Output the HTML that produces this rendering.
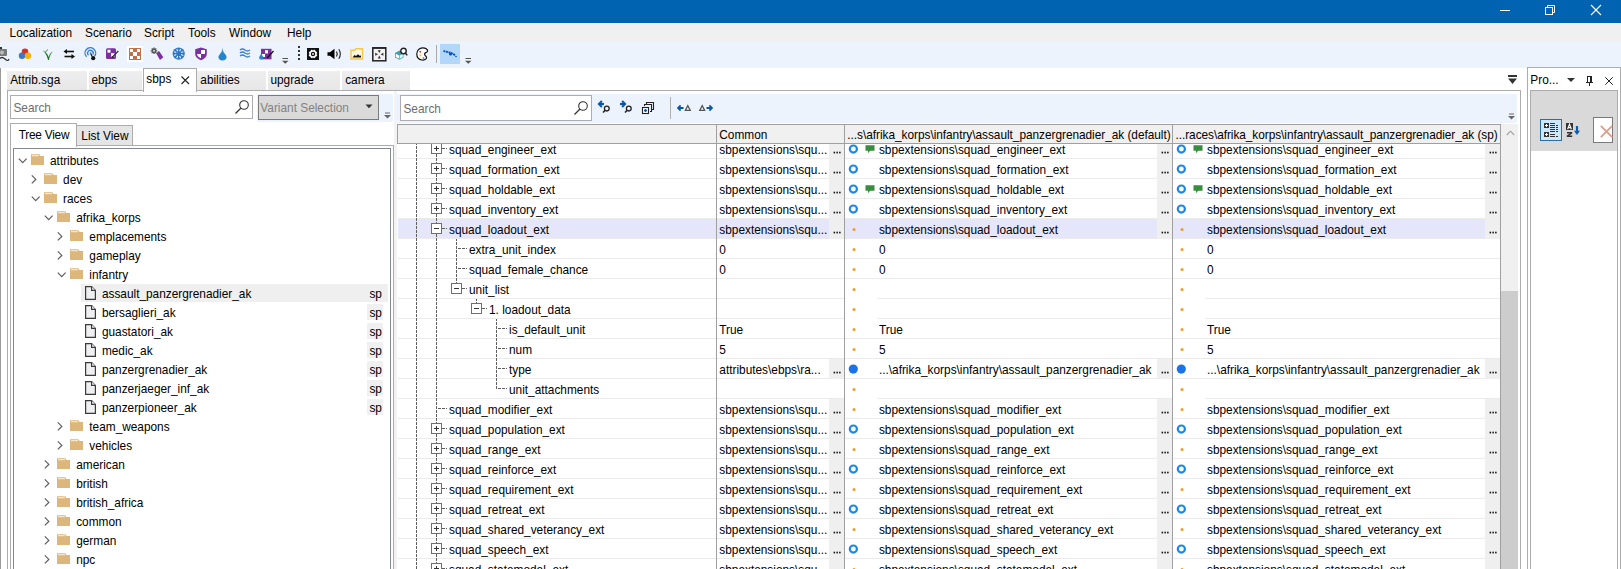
<!DOCTYPE html><html><head><meta charset="utf-8"><style>
html,body{margin:0;padding:0;}
body{width:1621px;height:569px;overflow:hidden;position:relative;background:#fff;font-family:"Liberation Sans",sans-serif;}
.t{position:absolute;white-space:nowrap;line-height:1;}
svg{overflow:visible;position:absolute}
</style></head><body>
<div style="position:absolute;left:0px;top:0px;width:1621px;height:23px;background:#0063B1;"></div>
<div style="position:absolute;left:1500px;top:10px;width:10px;height:1px;background:#fff;"></div>
<svg style="position:absolute;left:1544px;top:3px;" width="13" height="13" viewBox="0 0 13 13"><rect x="1.5" y="4.5" width="7" height="7" fill="none" stroke="#fff" stroke-width="1"/><path d="M3.5 4.5V2.5H10.5V9.5H8.5" fill="none" stroke="#fff" stroke-width="1"/></svg>
<svg style="position:absolute;left:1590px;top:4px;" width="13" height="13" viewBox="0 0 13 13"><path d="M1 1L11 11M11 1L1 11" stroke="#fff" stroke-width="1.1"/></svg>
<div style="position:absolute;left:0px;top:23px;width:1621px;height:18px;background:#F0F0F0;"></div>
<div class="t" style="left:9.6px;top:28px;font-size:11.85px;color:#000;">Localization</div>
<div class="t" style="left:85px;top:28px;font-size:11.85px;color:#000;">Scenario</div>
<div class="t" style="left:144px;top:28px;font-size:11.85px;color:#000;">Script</div>
<div class="t" style="left:188px;top:28px;font-size:11.85px;color:#000;">Tools</div>
<div class="t" style="left:229px;top:28px;font-size:11.85px;color:#000;">Window</div>
<div class="t" style="left:287px;top:28px;font-size:11.85px;color:#000;">Help</div>
<div style="position:absolute;left:0px;top:41px;width:1621px;height:27px;background:#ECF3FC;"></div>
<svg style="position:absolute;left:0px;top:47px;" width="10" height="14" viewBox="0 0 10 14"><rect x="-3" y="2" width="10" height="7" rx="1" fill="#7a7a7a"/><circle cx="2" cy="5.5" r="2" fill="#bbb"/><rect x="-1" y="0" width="3" height="2" fill="#333"/><path d="M-1 12 Q2 9 5 12 T9 12" fill="none" stroke="#333" stroke-width="1.2"/></svg>
<svg style="position:absolute;left:17px;top:47px;" width="16" height="14" viewBox="0 0 16 14"><circle cx="8" cy="4.9" r="3.3" fill="#d93025"/><circle cx="5" cy="8.7" r="3.2" fill="#3a78c9"/><circle cx="11" cy="8.7" r="3.2" fill="#f4b400"/></svg>
<svg style="position:absolute;left:42px;top:48px;" width="12" height="13" viewBox="0 0 12 13"><path d="M6 12 C5.6 9 4 5.5 0.8 2.2 C4.2 4 6 6.5 6.6 9.2 C7.3 6.8 8.6 4.8 10.8 3.6 C8.8 5.6 7.4 8.5 7 12 Z" fill="#117a11"/><path d="M3.2 4 C4.5 3.5 5.2 2.5 5.5 1.5" stroke="#117a11" stroke-width="0.8" fill="none"/></svg>
<svg style="position:absolute;left:63px;top:48px;" width="13" height="11" viewBox="0 0 13 11"><path d="M11 3.5H2.5" stroke="#111" stroke-width="1.6"/><path d="M0.5 3.5L4 1V6Z" fill="#111"/><path d="M1.5 8.5H10" stroke="#111" stroke-width="1.6"/><path d="M12 8.5L8.5 6V11Z" fill="#111"/></svg>
<svg style="position:absolute;left:84px;top:47px;" width="14" height="14" viewBox="0 0 14 14"><path d="M2.6 9.8 A5.3 5.3 0 1 1 10.6 9.2" fill="none" stroke="#3d7fd1" stroke-width="1.4"/><path d="M4.5 8.2 A2.8 2.8 0 1 1 8.8 7.6" fill="none" stroke="#3d7fd1" stroke-width="1.3"/><circle cx="6.6" cy="6.2" r="1" fill="#3d7fd1"/><path d="M6.8 7 L8.2 9.5" stroke="#111" stroke-width="1.2"/><circle cx="9.2" cy="11.2" r="2.1" fill="#111"/></svg>
<svg style="position:absolute;left:105px;top:47px;" width="16" height="14" viewBox="0 0 16 14"><rect x="1" y="1.2" width="10" height="10.8" rx="1.5" fill="#7b2fa0"/><rect x="2.5" y="2.7" width="3" height="3" fill="#fff"/><rect x="6" y="6.2" width="3.5" height="3.5" fill="#fff"/><path d="M7 10.5L13.3 4" stroke="#333" stroke-width="1.2"/><path d="M6.3 11.2L7.5 9.3L8.3 10.1Z" fill="#111"/></svg>
<div style="position:absolute;left:127px;top:46px;width:16px;height:16px;background:#ffffff;"></div>
<svg style="position:absolute;left:129px;top:48px;shape-rendering:crispEdges" width="12" height="12" viewBox="0 0 12 12"><rect x="0" y="0" width="12" height="12" fill="#c0714a"/><rect x="1" y="1" width="3" height="3" fill="#fff"/><rect x="8" y="1" width="3" height="3" fill="#fff"/><rect x="4" y="4" width="4" height="4" fill="#fff"/><rect x="1" y="8" width="3" height="3" fill="#fff"/><rect x="8" y="8" width="3" height="3" fill="#fff"/></svg>
<svg style="position:absolute;left:150px;top:47px;" width="14" height="15" viewBox="0 0 14 15"><g transform="translate(4 3.8)"><circle r="2.3" fill="#555"/><g stroke="#555" stroke-width="1.3"><path d="M0 -3.3V3.3M-3.3 0H3.3M-2.3 -2.3L2.3 2.3M2.3 -2.3L-2.3 2.3"/></g><circle r="0.9" fill="#fff"/></g><path d="M6.2 6.2 L9 4 L13.3 10.3 L10 13Z" fill="#7b2fa0"/></svg>
<svg style="position:absolute;left:172px;top:47px;" width="14" height="14" viewBox="0 0 14 14"><circle cx="6.7" cy="6.6" r="6.1" fill="#2F76C4"/><path d="M9.10 7.59L11.32 8.51M7.69 9.00L8.61 11.22M5.71 9.00L4.79 11.22M4.30 7.59L2.08 8.51M4.30 5.61L2.08 4.69M5.71 4.20L4.79 1.98M7.69 4.20L8.61 1.98M9.10 5.61L11.32 4.69" stroke="#EAF1FA" stroke-width="1.1"/></svg>
<svg style="position:absolute;left:194px;top:47px;" width="14" height="14" viewBox="0 0 14 14"><path d="M7 0.6 L12.8 2.3 V7 C12.8 10 10 12.2 7 13.2 C4 12.2 1.2 10 1.2 7 V2.3 Z" fill="#7b2fa0"/><path d="M7 3 H11 V7 H7 Z" fill="#fff"/><path d="M3 7 H7 V11.3 C5 10.5 3.3 9.2 3 7 Z" fill="#fff"/></svg>
<svg style="position:absolute;left:217px;top:47px;" width="11" height="14" viewBox="0 0 11 14"><path d="M5.6 0.8 C5.6 3.5 6 5 8 7 C9.5 8.6 9.6 10 9.6 10.2 A4.2 4.2 0 0 1 1.4 10.2 C1.4 10 1.6 8.6 3 7 C5 5 5.4 3.5 5.4 0.8 Z" fill="#2385cc"/></svg>
<svg style="position:absolute;left:239px;top:48px;" width="12" height="11" viewBox="0 0 12 11"><g fill="none" stroke="#3b7fcc" stroke-width="1.3"><path d="M1 2 Q3.5 0 6 2 T11 2"/><path d="M1 5 Q3.5 3 6 5 T11 5"/><path d="M1 8 Q3.5 6 6 8 T11 8"/></g></svg>
<svg style="position:absolute;left:259px;top:48px;" width="16" height="14" viewBox="0 0 16 14"><rect x="2" y="0.8" width="10.5" height="10.5" fill="#7b2fa0"/><rect x="6" y="2.2" width="3" height="3.2" fill="#fff"/><rect x="3" y="6" width="3" height="3" fill="#fff"/><path d="M2.2 5 C2.2 7 4.5 8 4.5 10 A2.4 2.4 0 0 1 0 10 C0 8 2.2 7 2.2 5Z" fill="#2385cc"/><path d="M8 10L14.5 3" stroke="#111" stroke-width="1.2"/></svg>
<svg style="position:absolute;left:282px;top:58px;" width="7" height="7" viewBox="0 0 7 7"><rect x="0.5" y="0" width="5.5" height="1" fill="#555"/><path d="M0 2.8H6.5L3.25 5.8Z" fill="#555"/></svg>
<div style="position:absolute;left:298px;top:46px;width:2px;height:2px;background:#333;"></div>
<div style="position:absolute;left:298px;top:50px;width:2px;height:2px;background:#333;"></div>
<div style="position:absolute;left:298px;top:54px;width:2px;height:2px;background:#333;"></div>
<div style="position:absolute;left:298px;top:58px;width:2px;height:2px;background:#333;"></div>
<svg style="position:absolute;left:307px;top:48px;" width="13" height="13" viewBox="0 0 13 13"><rect x="0" y="0" width="12" height="12" fill="#111"/><circle cx="6" cy="6" r="4.4" fill="#fff"/><g stroke="#111" stroke-width="1.6"><path d="M6 0.8V2.3M6 9.7V11.2M0.8 6H2.3M9.7 6H11.2M2.3 2.3L3.3 3.3M8.7 8.7L9.7 9.7M9.7 2.3L8.7 3.3M3.3 8.7L2.3 9.7"/></g><circle cx="6" cy="6" r="2.2" fill="#111"/><circle cx="6" cy="6" r="0.9" fill="#fff"/></svg>
<svg style="position:absolute;left:327px;top:48px;" width="16" height="12" viewBox="0 0 16 12"><path d="M0.5 4.3H3L7.5 0.8V11.2L3 7.7H0.5Z" fill="#000"/><path d="M9.5 3.5 Q11 6 9.5 8.5" fill="none" stroke="#111" stroke-width="1.1"/><path d="M11.8 1.2 Q14.8 6 11.8 10.8" fill="none" stroke="#222" stroke-width="1.1"/></svg>
<svg style="position:absolute;left:350px;top:48px;" width="14" height="12" viewBox="0 0 14 12"><path d="M1 2.2 H4.5 L6 0.8 H12.5 V11 H1 Z" fill="#fff8e0" stroke="#f7c64a" stroke-width="1.4"/><path d="M2.5 9.6 L4.5 7 L6 8 L8 6.2 L10 8 L11 7.2 V9.6 Z" fill="#111"/></svg>
<svg style="position:absolute;left:372px;top:47px;" width="15" height="15" viewBox="0 0 15 15"><rect x="0.8" y="0.8" width="13" height="13" fill="#f2f2f2" stroke="#222" stroke-width="1.5"/><rect x="0.8" y="0.5" width="13" height="1.3" fill="#222"/><g fill="#333"><path d="M7.3 6 L5.8 3.2H8.8Z"/><path d="M7.3 8.6 L5.8 11.4H8.8Z"/><path d="M6 7.3 L3.2 5.8V8.8Z"/><path d="M8.6 7.3 L11.4 5.8V8.8Z"/></g></svg>
<svg style="position:absolute;left:394px;top:47px;" width="14" height="14" viewBox="0 0 14 14"><path d="M1 6 L5.5 3.6 L9.5 6 V10.5 L5.5 12.8 L1 10.5Z" fill="#3ba0b0"/><path d="M1.8 6.8 L5.2 8.5 V11.8 L1.8 10Z" fill="#fff"/><path d="M5.8 8.5 L8.8 6.8 V10 L5.8 11.8Z" fill="#dff"/><circle cx="9.5" cy="4" r="2.7" fill="#fff" stroke="#222" stroke-width="1.4"/><path d="M11.4 6 L13.2 8.4" stroke="#222" stroke-width="1.5"/></svg>
<svg style="position:absolute;left:416px;top:47px;" width="13" height="14" viewBox="0 0 13 14"><path d="M6.5 0.8 C10 0.8 12.2 2.8 11.5 4.5 C10.8 5.5 8.5 5.5 8.5 7.2 C8.5 9 11.3 9.3 10.5 11.3 C9.6 13 7.5 13.2 6 13 C2.5 12.5 0.8 10 0.8 7 C0.8 3.5 3.3 0.8 6.5 0.8Z" fill="#fff" stroke="#111" stroke-width="1.2"/><circle cx="4.2" cy="4.7" r="1" fill="#e04040"/><circle cx="4.4" cy="8.5" r="1.1" fill="#f5c242"/><circle cx="7.5" cy="11" r="1" fill="#6a8fe0"/></svg>
<div style="position:absolute;left:436px;top:45px;width:1px;height:18px;background:#A8A8A8;"></div>
<div style="position:absolute;left:440px;top:44px;width:20px;height:20px;background:#B3D7F8;"></div>
<svg style="position:absolute;left:442px;top:50px;" width="16" height="8" viewBox="0 0 16 8"><path d="M1.5 1 C3 1.2 5 2 7 2.3 C9 2.8 11 3.6 13.5 5.8" stroke="#0050c0" stroke-width="1.8" fill="none" stroke-dasharray="2 0.6"/><circle cx="8.5" cy="4" r="1.5" fill="#0050c0"/><circle cx="14" cy="6.5" r="0.8" fill="#0050c0"/></svg>
<svg style="position:absolute;left:465px;top:58px;" width="7" height="7" viewBox="0 0 7 7"><rect x="0.5" y="0" width="5.5" height="1" fill="#555"/><path d="M0 2.8H6.5L3.25 5.8Z" fill="#555"/></svg>
<div style="position:absolute;left:0px;top:68px;width:1px;height:501px;background:#9A9A9A;"></div>
<div style="position:absolute;left:7px;top:71px;width:80px;height:19px;background:linear-gradient(#EEEEEE,#E7E7E7);"></div>
<div class="t" style="left:10.2px;top:75px;font-size:11.85px;color:#000;">Attrib.sga</div>
<div style="position:absolute;left:89px;top:71px;width:53px;height:19px;background:linear-gradient(#EEEEEE,#E7E7E7);"></div>
<div class="t" style="left:91.5px;top:75px;font-size:11.85px;color:#000;">ebps</div>
<div style="position:absolute;left:197px;top:71px;width:69px;height:19px;background:linear-gradient(#EEEEEE,#E7E7E7);"></div>
<div class="t" style="left:200.3px;top:75px;font-size:11.85px;color:#000;">abilities</div>
<div style="position:absolute;left:268px;top:71px;width:72px;height:19px;background:linear-gradient(#EEEEEE,#E7E7E7);"></div>
<div class="t" style="left:270.4px;top:75px;font-size:11.85px;color:#000;">upgrade</div>
<div style="position:absolute;left:342px;top:71px;width:68px;height:19px;background:linear-gradient(#EEEEEE,#E7E7E7);"></div>
<div class="t" style="left:345.2px;top:75px;font-size:11.85px;color:#000;">camera</div>
<div style="position:absolute;left:7px;top:90px;width:1514px;height:1px;background:#ACACAC;"></div>
<div style="position:absolute;left:7px;top:90px;width:1px;height:479px;background:#ACACAC;"></div>
<div style="position:absolute;left:1520px;top:90px;width:1px;height:479px;background:#ACACAC;"></div>
<div style="position:absolute;left:143px;top:68px;width:54px;height:24px;background:#fff;box-sizing:border-box;border:1px solid #ACACAC;border-bottom:none;"></div>
<div class="t" style="left:146.3px;top:74px;font-size:11.85px;color:#000;">sbps</div>
<svg style="position:absolute;left:181px;top:76px;" width="9" height="9" viewBox="0 0 9 9"><path d="M0.5 0.5L8 8M8 0.5L0.5 8" stroke="#222" stroke-width="1.1"/></svg>
<svg style="position:absolute;left:1507px;top:74px;" width="11" height="11" viewBox="0 0 11 11"><rect x="1" y="1" width="9" height="2" fill="#333"/><path d="M1 4.5H10L5.5 10Z" fill="#333"/></svg>
<div style="position:absolute;left:10px;top:95px;width:243px;height:24px;background:#fff;box-sizing:border-box;border:1px solid #ABADB3;"></div>
<div class="t" style="left:13.4px;top:103px;font-size:11.85px;color:#6D6D6D;">Search</div>
<svg style="position:absolute;left:234px;top:99px;" width="16" height="16" viewBox="0 0 16 16"><circle cx="10" cy="6" r="4.3" fill="none" stroke="#333" stroke-width="1.1"/><path d="M7 9L1.5 14.5" stroke="#333" stroke-width="1.2"/></svg>
<div style="position:absolute;left:257px;top:94px;width:136px;height:28px;background:#ECF3FC;border-radius:2px;"></div>
<div style="position:absolute;left:258px;top:95px;width:121px;height:25px;background:#DADADA;box-sizing:border-box;border:1px solid #7A7A7A;"></div>
<div class="t" style="left:260.3px;top:103px;font-size:11.85px;color:#838383;">Variant Selection</div>
<svg style="position:absolute;left:365px;top:104px;" width="8" height="5" viewBox="0 0 8 5"><path d="M0.5 0.5H7.5L4 4.2Z" fill="#333"/></svg>
<svg style="position:absolute;left:384px;top:112px;" width="7" height="8" viewBox="0 0 7 8"><rect x="1" y="0.5" width="5" height="1" fill="#666"/><path d="M0 3H7L3.5 6.5Z" fill="#666"/></svg>
<div style="position:absolute;left:76px;top:125px;width:57px;height:21px;background:#E5E5E5;box-sizing:border-box;border:1px solid #ACACAC;border-bottom:none;"></div>
<div class="t" style="left:81.3px;top:131px;font-size:11.85px;color:#000;">List View</div>
<div style="position:absolute;left:10px;top:145px;width:384px;height:424px;background:#fff;box-sizing:border-box;border:1px solid #ACACAC;border-bottom:none;"></div>
<div style="position:absolute;left:10px;top:123px;width:67px;height:24px;background:#fff;box-sizing:border-box;border:1px solid #ACACAC;border-bottom:none;"></div>
<div class="t" style="left:18.8px;top:130px;font-size:11.85px;color:#000;letter-spacing:-0.25px">Tree View</div>
<div style="position:absolute;left:13px;top:148px;width:378px;height:421px;background:#fff;box-sizing:border-box;border:1px solid #828790;border-bottom:none;"></div>
<svg style="position:absolute;left:18.0px;top:157.5px;" width="10" height="7" viewBox="0 0 10 7"><path d="M0.8 0.6 L4.7 4.6 L8.6 0.6" fill="none" stroke="#606060" stroke-width="1.25"/></svg>
<svg style="position:absolute;left:30.7px;top:154px;" width="13" height="11" viewBox="0 0 13 11"><path d="M0 0.2 H8.3 L9.6 2 H13 V11 H0 Z" fill="#DCB67A"/><rect x="1" y="1.2" width="7" height="1" fill="#FAF2E2"/></svg>
<div class="t" style="left:50.0px;top:156px;font-size:11.85px;color:#000;">attributes</div>
<svg style="position:absolute;left:31.0px;top:175px;" width="7" height="10" viewBox="0 0 7 10"><path d="M0.8 0.4 L4.8 4.4 L0.8 8.4" fill="none" stroke="#606060" stroke-width="1.25"/></svg>
<svg style="position:absolute;left:43.8px;top:173px;" width="13" height="11" viewBox="0 0 13 11"><path d="M0 0.2 H8.3 L9.6 2 H13 V11 H0 Z" fill="#DCB67A"/><rect x="1" y="1.2" width="7" height="1" fill="#FAF2E2"/></svg>
<div class="t" style="left:63.1px;top:175px;font-size:11.85px;color:#000;">dev</div>
<svg style="position:absolute;left:31.1px;top:195.5px;" width="10" height="7" viewBox="0 0 10 7"><path d="M0.8 0.6 L4.7 4.6 L8.6 0.6" fill="none" stroke="#606060" stroke-width="1.25"/></svg>
<svg style="position:absolute;left:43.8px;top:192px;" width="13" height="11" viewBox="0 0 13 11"><path d="M0 0.2 H8.3 L9.6 2 H13 V11 H0 Z" fill="#DCB67A"/><rect x="1" y="1.2" width="7" height="1" fill="#FAF2E2"/></svg>
<div class="t" style="left:63.1px;top:194px;font-size:11.85px;color:#000;">races</div>
<svg style="position:absolute;left:44.2px;top:214.5px;" width="10" height="7" viewBox="0 0 10 7"><path d="M0.8 0.6 L4.7 4.6 L8.6 0.6" fill="none" stroke="#606060" stroke-width="1.25"/></svg>
<svg style="position:absolute;left:56.9px;top:211px;" width="13" height="11" viewBox="0 0 13 11"><path d="M0 0.2 H8.3 L9.6 2 H13 V11 H0 Z" fill="#DCB67A"/><rect x="1" y="1.2" width="7" height="1" fill="#FAF2E2"/></svg>
<div class="t" style="left:76.2px;top:213px;font-size:11.85px;color:#000;">afrika_korps</div>
<svg style="position:absolute;left:57.199999999999996px;top:232px;" width="7" height="10" viewBox="0 0 7 10"><path d="M0.8 0.4 L4.8 4.4 L0.8 8.4" fill="none" stroke="#606060" stroke-width="1.25"/></svg>
<svg style="position:absolute;left:70.0px;top:230px;" width="13" height="11" viewBox="0 0 13 11"><path d="M0 0.2 H8.3 L9.6 2 H13 V11 H0 Z" fill="#DCB67A"/><rect x="1" y="1.2" width="7" height="1" fill="#FAF2E2"/></svg>
<div class="t" style="left:89.3px;top:232px;font-size:11.85px;color:#000;">emplacements</div>
<svg style="position:absolute;left:57.199999999999996px;top:251px;" width="7" height="10" viewBox="0 0 7 10"><path d="M0.8 0.4 L4.8 4.4 L0.8 8.4" fill="none" stroke="#606060" stroke-width="1.25"/></svg>
<svg style="position:absolute;left:70.0px;top:249px;" width="13" height="11" viewBox="0 0 13 11"><path d="M0 0.2 H8.3 L9.6 2 H13 V11 H0 Z" fill="#DCB67A"/><rect x="1" y="1.2" width="7" height="1" fill="#FAF2E2"/></svg>
<div class="t" style="left:89.3px;top:251px;font-size:11.85px;color:#000;">gameplay</div>
<svg style="position:absolute;left:57.3px;top:271.5px;" width="10" height="7" viewBox="0 0 10 7"><path d="M0.8 0.6 L4.7 4.6 L8.6 0.6" fill="none" stroke="#606060" stroke-width="1.25"/></svg>
<svg style="position:absolute;left:70.0px;top:268px;" width="13" height="11" viewBox="0 0 13 11"><path d="M0 0.2 H8.3 L9.6 2 H13 V11 H0 Z" fill="#DCB67A"/><rect x="1" y="1.2" width="7" height="1" fill="#FAF2E2"/></svg>
<div class="t" style="left:89.3px;top:270px;font-size:11.85px;color:#000;">infantry</div>
<div style="position:absolute;left:81px;top:284px;width:307px;height:17.5px;background:#EFEFEF;"></div>
<div class="t" style="left:369.4px;top:289px;font-size:11.85px;color:#000;">sp</div>
<svg style="position:absolute;left:85px;top:286px;" width="12" height="15" viewBox="0 0 12 15"><path d="M0.6 0.6 H6.6 L10.4 4.4 V13.4 H0.6 Z" fill="#EFEFF1" stroke="#3a3a3a" stroke-width="1.2" stroke-linejoin="miter"/><path d="M6.6 0.6 V4.4 H10.4" fill="#fff" stroke="#3a3a3a" stroke-width="1.2"/></svg>
<div class="t" style="left:101.9px;top:289px;font-size:11.85px;color:#000;">assault_panzergrenadier_ak</div>
<div style="position:absolute;left:367px;top:304px;width:16px;height:16px;background:#F0F0F0;"></div>
<div class="t" style="left:369.4px;top:308px;font-size:11.85px;color:#000;">sp</div>
<svg style="position:absolute;left:85px;top:305px;" width="12" height="15" viewBox="0 0 12 15"><path d="M0.6 0.6 H6.6 L10.4 4.4 V13.4 H0.6 Z" fill="#EFEFF1" stroke="#3a3a3a" stroke-width="1.2" stroke-linejoin="miter"/><path d="M6.6 0.6 V4.4 H10.4" fill="#fff" stroke="#3a3a3a" stroke-width="1.2"/></svg>
<div class="t" style="left:101.9px;top:308px;font-size:11.85px;color:#000;">bersaglieri_ak</div>
<div style="position:absolute;left:367px;top:323px;width:16px;height:16px;background:#F0F0F0;"></div>
<div class="t" style="left:369.4px;top:327px;font-size:11.85px;color:#000;">sp</div>
<svg style="position:absolute;left:85px;top:324px;" width="12" height="15" viewBox="0 0 12 15"><path d="M0.6 0.6 H6.6 L10.4 4.4 V13.4 H0.6 Z" fill="#EFEFF1" stroke="#3a3a3a" stroke-width="1.2" stroke-linejoin="miter"/><path d="M6.6 0.6 V4.4 H10.4" fill="#fff" stroke="#3a3a3a" stroke-width="1.2"/></svg>
<div class="t" style="left:101.9px;top:327px;font-size:11.85px;color:#000;">guastatori_ak</div>
<div style="position:absolute;left:367px;top:342px;width:16px;height:16px;background:#F0F0F0;"></div>
<div class="t" style="left:369.4px;top:346px;font-size:11.85px;color:#000;">sp</div>
<svg style="position:absolute;left:85px;top:343px;" width="12" height="15" viewBox="0 0 12 15"><path d="M0.6 0.6 H6.6 L10.4 4.4 V13.4 H0.6 Z" fill="#EFEFF1" stroke="#3a3a3a" stroke-width="1.2" stroke-linejoin="miter"/><path d="M6.6 0.6 V4.4 H10.4" fill="#fff" stroke="#3a3a3a" stroke-width="1.2"/></svg>
<div class="t" style="left:101.9px;top:346px;font-size:11.85px;color:#000;">medic_ak</div>
<div style="position:absolute;left:367px;top:361px;width:16px;height:16px;background:#F0F0F0;"></div>
<div class="t" style="left:369.4px;top:365px;font-size:11.85px;color:#000;">sp</div>
<svg style="position:absolute;left:85px;top:362px;" width="12" height="15" viewBox="0 0 12 15"><path d="M0.6 0.6 H6.6 L10.4 4.4 V13.4 H0.6 Z" fill="#EFEFF1" stroke="#3a3a3a" stroke-width="1.2" stroke-linejoin="miter"/><path d="M6.6 0.6 V4.4 H10.4" fill="#fff" stroke="#3a3a3a" stroke-width="1.2"/></svg>
<div class="t" style="left:101.9px;top:365px;font-size:11.85px;color:#000;">panzergrenadier_ak</div>
<div style="position:absolute;left:367px;top:380px;width:16px;height:16px;background:#F0F0F0;"></div>
<div class="t" style="left:369.4px;top:384px;font-size:11.85px;color:#000;">sp</div>
<svg style="position:absolute;left:85px;top:381px;" width="12" height="15" viewBox="0 0 12 15"><path d="M0.6 0.6 H6.6 L10.4 4.4 V13.4 H0.6 Z" fill="#EFEFF1" stroke="#3a3a3a" stroke-width="1.2" stroke-linejoin="miter"/><path d="M6.6 0.6 V4.4 H10.4" fill="#fff" stroke="#3a3a3a" stroke-width="1.2"/></svg>
<div class="t" style="left:101.9px;top:384px;font-size:11.85px;color:#000;">panzerjaeger_inf_ak</div>
<div style="position:absolute;left:367px;top:399px;width:16px;height:16px;background:#F0F0F0;"></div>
<div class="t" style="left:369.4px;top:403px;font-size:11.85px;color:#000;">sp</div>
<svg style="position:absolute;left:85px;top:400px;" width="12" height="15" viewBox="0 0 12 15"><path d="M0.6 0.6 H6.6 L10.4 4.4 V13.4 H0.6 Z" fill="#EFEFF1" stroke="#3a3a3a" stroke-width="1.2" stroke-linejoin="miter"/><path d="M6.6 0.6 V4.4 H10.4" fill="#fff" stroke="#3a3a3a" stroke-width="1.2"/></svg>
<div class="t" style="left:101.9px;top:403px;font-size:11.85px;color:#000;">panzerpioneer_ak</div>
<svg style="position:absolute;left:57.199999999999996px;top:422px;" width="7" height="10" viewBox="0 0 7 10"><path d="M0.8 0.4 L4.8 4.4 L0.8 8.4" fill="none" stroke="#606060" stroke-width="1.25"/></svg>
<svg style="position:absolute;left:70.0px;top:420px;" width="13" height="11" viewBox="0 0 13 11"><path d="M0 0.2 H8.3 L9.6 2 H13 V11 H0 Z" fill="#DCB67A"/><rect x="1" y="1.2" width="7" height="1" fill="#FAF2E2"/></svg>
<div class="t" style="left:89.3px;top:422px;font-size:11.85px;color:#000;">team_weapons</div>
<svg style="position:absolute;left:57.199999999999996px;top:441px;" width="7" height="10" viewBox="0 0 7 10"><path d="M0.8 0.4 L4.8 4.4 L0.8 8.4" fill="none" stroke="#606060" stroke-width="1.25"/></svg>
<svg style="position:absolute;left:70.0px;top:439px;" width="13" height="11" viewBox="0 0 13 11"><path d="M0 0.2 H8.3 L9.6 2 H13 V11 H0 Z" fill="#DCB67A"/><rect x="1" y="1.2" width="7" height="1" fill="#FAF2E2"/></svg>
<div class="t" style="left:89.3px;top:441px;font-size:11.85px;color:#000;">vehicles</div>
<svg style="position:absolute;left:44.1px;top:460px;" width="7" height="10" viewBox="0 0 7 10"><path d="M0.8 0.4 L4.8 4.4 L0.8 8.4" fill="none" stroke="#606060" stroke-width="1.25"/></svg>
<svg style="position:absolute;left:56.9px;top:458px;" width="13" height="11" viewBox="0 0 13 11"><path d="M0 0.2 H8.3 L9.6 2 H13 V11 H0 Z" fill="#DCB67A"/><rect x="1" y="1.2" width="7" height="1" fill="#FAF2E2"/></svg>
<div class="t" style="left:76.2px;top:460px;font-size:11.85px;color:#000;">american</div>
<svg style="position:absolute;left:44.1px;top:479px;" width="7" height="10" viewBox="0 0 7 10"><path d="M0.8 0.4 L4.8 4.4 L0.8 8.4" fill="none" stroke="#606060" stroke-width="1.25"/></svg>
<svg style="position:absolute;left:56.9px;top:477px;" width="13" height="11" viewBox="0 0 13 11"><path d="M0 0.2 H8.3 L9.6 2 H13 V11 H0 Z" fill="#DCB67A"/><rect x="1" y="1.2" width="7" height="1" fill="#FAF2E2"/></svg>
<div class="t" style="left:76.2px;top:479px;font-size:11.85px;color:#000;">british</div>
<svg style="position:absolute;left:44.1px;top:498px;" width="7" height="10" viewBox="0 0 7 10"><path d="M0.8 0.4 L4.8 4.4 L0.8 8.4" fill="none" stroke="#606060" stroke-width="1.25"/></svg>
<svg style="position:absolute;left:56.9px;top:496px;" width="13" height="11" viewBox="0 0 13 11"><path d="M0 0.2 H8.3 L9.6 2 H13 V11 H0 Z" fill="#DCB67A"/><rect x="1" y="1.2" width="7" height="1" fill="#FAF2E2"/></svg>
<div class="t" style="left:76.2px;top:498px;font-size:11.85px;color:#000;">british_africa</div>
<svg style="position:absolute;left:44.1px;top:517px;" width="7" height="10" viewBox="0 0 7 10"><path d="M0.8 0.4 L4.8 4.4 L0.8 8.4" fill="none" stroke="#606060" stroke-width="1.25"/></svg>
<svg style="position:absolute;left:56.9px;top:515px;" width="13" height="11" viewBox="0 0 13 11"><path d="M0 0.2 H8.3 L9.6 2 H13 V11 H0 Z" fill="#DCB67A"/><rect x="1" y="1.2" width="7" height="1" fill="#FAF2E2"/></svg>
<div class="t" style="left:76.2px;top:517px;font-size:11.85px;color:#000;">common</div>
<svg style="position:absolute;left:44.1px;top:536px;" width="7" height="10" viewBox="0 0 7 10"><path d="M0.8 0.4 L4.8 4.4 L0.8 8.4" fill="none" stroke="#606060" stroke-width="1.25"/></svg>
<svg style="position:absolute;left:56.9px;top:534px;" width="13" height="11" viewBox="0 0 13 11"><path d="M0 0.2 H8.3 L9.6 2 H13 V11 H0 Z" fill="#DCB67A"/><rect x="1" y="1.2" width="7" height="1" fill="#FAF2E2"/></svg>
<div class="t" style="left:76.2px;top:536px;font-size:11.85px;color:#000;">german</div>
<svg style="position:absolute;left:44.1px;top:555px;" width="7" height="10" viewBox="0 0 7 10"><path d="M0.8 0.4 L4.8 4.4 L0.8 8.4" fill="none" stroke="#606060" stroke-width="1.25"/></svg>
<svg style="position:absolute;left:56.9px;top:553px;" width="13" height="11" viewBox="0 0 13 11"><path d="M0 0.2 H8.3 L9.6 2 H13 V11 H0 Z" fill="#DCB67A"/><rect x="1" y="1.2" width="7" height="1" fill="#FAF2E2"/></svg>
<div class="t" style="left:76.2px;top:555px;font-size:11.85px;color:#000;">npc</div>
<div style="position:absolute;left:394px;top:91px;width:3px;height:478px;background:#F3F3F3;"></div>
<div style="position:absolute;left:396px;top:94px;width:1121px;height:29px;background:#ECF3FC;border-radius:2px;"></div>
<div style="position:absolute;left:400px;top:95px;width:192px;height:26px;background:#fff;box-sizing:border-box;border:1px solid #ABADB3;"></div>
<div class="t" style="left:403.4px;top:104px;font-size:11.85px;color:#6D6D6D;">Search</div>
<svg style="position:absolute;left:573px;top:100px;" width="16" height="16" viewBox="0 0 16 16"><circle cx="10" cy="6" r="4.3" fill="none" stroke="#333" stroke-width="1.1"/><path d="M7 9L1.5 14.5" stroke="#333" stroke-width="1.2"/></svg>
<svg style="position:absolute;left:596px;top:99px;" width="16" height="16" viewBox="0 0 16 16"><path d="M3 5 H8" stroke="#0A56A8" stroke-width="2.2"/><path d="M1.5 5 L5.2 1.3 L6.6 2.7 L4.3 5 L6.6 7.3 L5.2 8.7Z" fill="#0A56A8"/><circle cx="10.8" cy="9.6" r="2.4" fill="none" stroke="#222" stroke-width="1.3"/><path d="M9.2 11.3 L7 13.5" stroke="#222" stroke-width="1.6"/></svg>
<svg style="position:absolute;left:618px;top:99px;" width="16" height="16" viewBox="0 0 16 16"><path d="M2 5 H7" stroke="#0A56A8" stroke-width="2.2"/><path d="M8.5 5 L4.8 1.3 L3.4 2.7 L5.7 5 L3.4 7.3 L4.8 8.7Z" fill="#0A56A8"/><circle cx="10.8" cy="9.6" r="2.4" fill="none" stroke="#222" stroke-width="1.3"/><path d="M9.2 11.3 L7 13.5" stroke="#222" stroke-width="1.6"/></svg>
<svg style="position:absolute;left:641px;top:101px;" width="14" height="14" viewBox="0 0 14 14"><rect x="1.5" y="6.5" width="6" height="6" fill="#fff" stroke="#222" stroke-width="1.1"/><path d="M3.5 5 V3.5 H10.5 V10.5 H9" fill="none" stroke="#222" stroke-width="1.1"/><path d="M5.5 3 V1.5 H12.5 V8.5 H11" fill="none" stroke="#222" stroke-width="1.1"/><path d="M4.5 8V11M3 9.5H6" stroke="#0A56A8" stroke-width="1.3"/></svg>
<div style="position:absolute;left:670px;top:97px;width:1px;height:22px;background:#B0B0B0;"></div>
<svg style="position:absolute;left:676px;top:103px;" width="16" height="9" viewBox="0 0 16 9"><path d="M2.5 5 H7.5" stroke="#0A56A8" stroke-width="2"/><path d="M0.8 5 L4 1.8 L5.2 3 L3.2 5 L5.2 7 L4 8.2Z" fill="#0A56A8"/><path d="M11.8 2.6 L14.3 7.4 H9.3 Z" fill="none" stroke="#555" stroke-width="1.2"/></svg>
<svg style="position:absolute;left:698px;top:103px;" width="16" height="9" viewBox="0 0 16 9"><path d="M4.2 2.6 L6.7 7.4 H1.7 Z" fill="none" stroke="#555" stroke-width="1.2"/><path d="M8.5 5 H13.5" stroke="#0A56A8" stroke-width="2"/><path d="M15.2 5 L12 1.8 L10.8 3 L12.8 5 L10.8 7 L12 8.2Z" fill="#0A56A8"/></svg>
<svg style="position:absolute;left:1508px;top:113px;" width="7" height="8" viewBox="0 0 7 8"><rect x="1" y="0.5" width="5" height="1" fill="#666"/><path d="M0 3H7L3.5 6.5Z" fill="#666"/></svg>
<div style="position:absolute;left:397px;top:124px;width:1104px;height:1px;background:#A0A0A0;"></div>
<div style="position:absolute;left:397px;top:124px;width:1px;height:20px;background:#A0A0A0;"></div>
<div style="position:absolute;left:398px;top:125px;width:1102px;height:18px;background:#F0F0F0;"></div>
<div style="position:absolute;left:398px;top:143px;width:1102px;height:1px;background:#A0A0A0;"></div>
<div class="t" style="left:719.3px;top:130px;font-size:11.85px;color:#000;">Common</div>
<div class="t" style="left:847.3px;top:130px;font-size:11.85px;color:#000;letter-spacing:-0.03px">...s\afrika_korps\infantry\assault_panzergrenadier_ak (default)</div>
<div class="t" style="left:1175.5px;top:130px;font-size:11.85px;color:#000;letter-spacing:-0.05px">...races\afrika_korps\infantry\assault_panzergrenadier_ak (sp)</div>
<div style="position:absolute;left:1501px;top:124px;width:17px;height:445px;background:#F0F0F0;"></div>
<div style="position:absolute;left:1501px;top:291px;width:17px;height:278px;background:#CDCDCD;"></div>
<svg style="position:absolute;left:1506px;top:130px;" width="9" height="6" viewBox="0 0 9 6"><path d="M0.8 5 L4.5 1.2 L8.2 5" fill="none" stroke="#A0A0A0" stroke-width="1.1"/></svg>
<div style="position:absolute;left:398px;top:144px;width:1103px;height:425px;overflow:hidden;">
<div style="position:absolute;left:0px;top:14px;width:1103px;height:1px;background:#EBEBEB;"></div>
<div style="position:absolute;left:431px;top:-5px;width:15px;height:20px;background:#EFEFEF;"></div>
<svg style="position:absolute;left:431px;top:-5px;" width="15" height="20" viewBox="0 0 15 20"><g fill="#111"><rect x="4.6" y="12.7" width="1.5" height="1.7"/><rect x="7.4" y="12.7" width="1.5" height="1.7"/><rect x="10.1" y="12.7" width="1.5" height="1.7"/></g></svg>
<div style="position:absolute;left:759px;top:-5px;width:15px;height:20px;background:#EFEFEF;"></div>
<svg style="position:absolute;left:759px;top:-5px;" width="15" height="20" viewBox="0 0 15 20"><g fill="#111"><rect x="4.6" y="12.7" width="1.5" height="1.7"/><rect x="7.4" y="12.7" width="1.5" height="1.7"/><rect x="10.1" y="12.7" width="1.5" height="1.7"/></g></svg>
<div style="position:absolute;left:1087px;top:-5px;width:15px;height:20px;background:#EFEFEF;"></div>
<svg style="position:absolute;left:1087px;top:-5px;" width="15" height="20" viewBox="0 0 15 20"><g fill="#111"><rect x="4.6" y="12.7" width="1.5" height="1.7"/><rect x="7.4" y="12.7" width="1.5" height="1.7"/><rect x="10.1" y="12.7" width="1.5" height="1.7"/></g></svg>
<div class="t" style="left:51px;top:1px;font-size:11.85px;color:#000;">squad_engineer_ext</div>
<div class="t" style="left:321.29999999999995px;top:1px;font-size:11.85px;color:#000;">sbpextensions\squ...</div>
<div class="t" style="left:480.9px;top:1px;font-size:11.85px;color:#000;">sbpextensions\squad_engineer_ext</div>
<div class="t" style="left:809px;top:1px;font-size:11.85px;color:#000;">sbpextensions\squad_engineer_ext</div>
<svg style="position:absolute;left:450px;top:0px;" width="11" height="11" viewBox="0 0 11 11"><circle cx="5.35" cy="5.05" r="3.55" fill="none" stroke="#1E88E5" stroke-width="2.2"/></svg>
<svg style="position:absolute;left:467px;top:1px;" width="11" height="10" viewBox="0 0 11 10"><path d="M0.5 0.2 H9.5 V5.8 H5 L3.2 8.3 L3 5.8 H0.5 Z" fill="#388E3C"/></svg>
<svg style="position:absolute;left:778px;top:0px;" width="11" height="11" viewBox="0 0 11 11"><circle cx="5.35" cy="5.05" r="3.55" fill="none" stroke="#1E88E5" stroke-width="2.2"/></svg>
<svg style="position:absolute;left:795px;top:1px;" width="11" height="10" viewBox="0 0 11 10"><path d="M0.5 0.2 H9.5 V5.8 H5 L3.2 8.3 L3 5.8 H0.5 Z" fill="#388E3C"/></svg>
<div style="position:absolute;left:0px;top:34px;width:1103px;height:1px;background:#EBEBEB;"></div>
<div style="position:absolute;left:431px;top:15px;width:15px;height:20px;background:#EFEFEF;"></div>
<svg style="position:absolute;left:431px;top:15px;" width="15" height="20" viewBox="0 0 15 20"><g fill="#111"><rect x="4.6" y="12.7" width="1.5" height="1.7"/><rect x="7.4" y="12.7" width="1.5" height="1.7"/><rect x="10.1" y="12.7" width="1.5" height="1.7"/></g></svg>
<div style="position:absolute;left:759px;top:15px;width:15px;height:20px;background:#EFEFEF;"></div>
<svg style="position:absolute;left:759px;top:15px;" width="15" height="20" viewBox="0 0 15 20"><g fill="#111"><rect x="4.6" y="12.7" width="1.5" height="1.7"/><rect x="7.4" y="12.7" width="1.5" height="1.7"/><rect x="10.1" y="12.7" width="1.5" height="1.7"/></g></svg>
<div style="position:absolute;left:1087px;top:15px;width:15px;height:20px;background:#EFEFEF;"></div>
<svg style="position:absolute;left:1087px;top:15px;" width="15" height="20" viewBox="0 0 15 20"><g fill="#111"><rect x="4.6" y="12.7" width="1.5" height="1.7"/><rect x="7.4" y="12.7" width="1.5" height="1.7"/><rect x="10.1" y="12.7" width="1.5" height="1.7"/></g></svg>
<div class="t" style="left:51px;top:21px;font-size:11.85px;color:#000;">squad_formation_ext</div>
<div class="t" style="left:321.29999999999995px;top:21px;font-size:11.85px;color:#000;">sbpextensions\squ...</div>
<div class="t" style="left:480.9px;top:21px;font-size:11.85px;color:#000;">sbpextensions\squad_formation_ext</div>
<div class="t" style="left:809px;top:21px;font-size:11.85px;color:#000;">sbpextensions\squad_formation_ext</div>
<svg style="position:absolute;left:450px;top:20px;" width="11" height="11" viewBox="0 0 11 11"><circle cx="5.35" cy="5.05" r="3.55" fill="none" stroke="#1E88E5" stroke-width="2.2"/></svg>
<svg style="position:absolute;left:778px;top:20px;" width="11" height="11" viewBox="0 0 11 11"><circle cx="5.35" cy="5.05" r="3.55" fill="none" stroke="#1E88E5" stroke-width="2.2"/></svg>
<div style="position:absolute;left:0px;top:54px;width:1103px;height:1px;background:#EBEBEB;"></div>
<div style="position:absolute;left:431px;top:35px;width:15px;height:20px;background:#EFEFEF;"></div>
<svg style="position:absolute;left:431px;top:35px;" width="15" height="20" viewBox="0 0 15 20"><g fill="#111"><rect x="4.6" y="12.7" width="1.5" height="1.7"/><rect x="7.4" y="12.7" width="1.5" height="1.7"/><rect x="10.1" y="12.7" width="1.5" height="1.7"/></g></svg>
<div style="position:absolute;left:759px;top:35px;width:15px;height:20px;background:#EFEFEF;"></div>
<svg style="position:absolute;left:759px;top:35px;" width="15" height="20" viewBox="0 0 15 20"><g fill="#111"><rect x="4.6" y="12.7" width="1.5" height="1.7"/><rect x="7.4" y="12.7" width="1.5" height="1.7"/><rect x="10.1" y="12.7" width="1.5" height="1.7"/></g></svg>
<div style="position:absolute;left:1087px;top:35px;width:15px;height:20px;background:#EFEFEF;"></div>
<svg style="position:absolute;left:1087px;top:35px;" width="15" height="20" viewBox="0 0 15 20"><g fill="#111"><rect x="4.6" y="12.7" width="1.5" height="1.7"/><rect x="7.4" y="12.7" width="1.5" height="1.7"/><rect x="10.1" y="12.7" width="1.5" height="1.7"/></g></svg>
<div class="t" style="left:51px;top:41px;font-size:11.85px;color:#000;">squad_holdable_ext</div>
<div class="t" style="left:321.29999999999995px;top:41px;font-size:11.85px;color:#000;">sbpextensions\squ...</div>
<div class="t" style="left:480.9px;top:41px;font-size:11.85px;color:#000;">sbpextensions\squad_holdable_ext</div>
<div class="t" style="left:809px;top:41px;font-size:11.85px;color:#000;">sbpextensions\squad_holdable_ext</div>
<svg style="position:absolute;left:450px;top:40px;" width="11" height="11" viewBox="0 0 11 11"><circle cx="5.35" cy="5.05" r="3.55" fill="none" stroke="#1E88E5" stroke-width="2.2"/></svg>
<svg style="position:absolute;left:467px;top:41px;" width="11" height="10" viewBox="0 0 11 10"><path d="M0.5 0.2 H9.5 V5.8 H5 L3.2 8.3 L3 5.8 H0.5 Z" fill="#388E3C"/></svg>
<svg style="position:absolute;left:778px;top:40px;" width="11" height="11" viewBox="0 0 11 11"><circle cx="5.35" cy="5.05" r="3.55" fill="none" stroke="#1E88E5" stroke-width="2.2"/></svg>
<svg style="position:absolute;left:795px;top:41px;" width="11" height="10" viewBox="0 0 11 10"><path d="M0.5 0.2 H9.5 V5.8 H5 L3.2 8.3 L3 5.8 H0.5 Z" fill="#388E3C"/></svg>
<div style="position:absolute;left:0px;top:74px;width:1103px;height:1px;background:#EBEBEB;"></div>
<div style="position:absolute;left:431px;top:55px;width:15px;height:20px;background:#EFEFEF;"></div>
<svg style="position:absolute;left:431px;top:55px;" width="15" height="20" viewBox="0 0 15 20"><g fill="#111"><rect x="4.6" y="12.7" width="1.5" height="1.7"/><rect x="7.4" y="12.7" width="1.5" height="1.7"/><rect x="10.1" y="12.7" width="1.5" height="1.7"/></g></svg>
<div style="position:absolute;left:759px;top:55px;width:15px;height:20px;background:#EFEFEF;"></div>
<svg style="position:absolute;left:759px;top:55px;" width="15" height="20" viewBox="0 0 15 20"><g fill="#111"><rect x="4.6" y="12.7" width="1.5" height="1.7"/><rect x="7.4" y="12.7" width="1.5" height="1.7"/><rect x="10.1" y="12.7" width="1.5" height="1.7"/></g></svg>
<div style="position:absolute;left:1087px;top:55px;width:15px;height:20px;background:#EFEFEF;"></div>
<svg style="position:absolute;left:1087px;top:55px;" width="15" height="20" viewBox="0 0 15 20"><g fill="#111"><rect x="4.6" y="12.7" width="1.5" height="1.7"/><rect x="7.4" y="12.7" width="1.5" height="1.7"/><rect x="10.1" y="12.7" width="1.5" height="1.7"/></g></svg>
<div class="t" style="left:51px;top:61px;font-size:11.85px;color:#000;">squad_inventory_ext</div>
<div class="t" style="left:321.29999999999995px;top:61px;font-size:11.85px;color:#000;">sbpextensions\squ...</div>
<div class="t" style="left:480.9px;top:61px;font-size:11.85px;color:#000;">sbpextensions\squad_inventory_ext</div>
<div class="t" style="left:809px;top:61px;font-size:11.85px;color:#000;">sbpextensions\squad_inventory_ext</div>
<svg style="position:absolute;left:450px;top:60px;" width="11" height="11" viewBox="0 0 11 11"><circle cx="5.35" cy="5.05" r="3.55" fill="none" stroke="#1E88E5" stroke-width="2.2"/></svg>
<svg style="position:absolute;left:778px;top:60px;" width="11" height="11" viewBox="0 0 11 11"><circle cx="5.35" cy="5.05" r="3.55" fill="none" stroke="#1E88E5" stroke-width="2.2"/></svg>
<div style="position:absolute;left:0px;top:75px;width:1103px;height:19px;background:#E6E6FA;"></div>
<div style="position:absolute;left:0px;top:94px;width:1103px;height:1px;background:#EBEBEB;"></div>
<div style="position:absolute;left:431px;top:75px;width:15px;height:20px;background:#EFEFEF;"></div>
<svg style="position:absolute;left:431px;top:75px;" width="15" height="20" viewBox="0 0 15 20"><g fill="#111"><rect x="4.6" y="12.7" width="1.5" height="1.7"/><rect x="7.4" y="12.7" width="1.5" height="1.7"/><rect x="10.1" y="12.7" width="1.5" height="1.7"/></g></svg>
<div style="position:absolute;left:759px;top:75px;width:15px;height:20px;background:#EFEFEF;"></div>
<svg style="position:absolute;left:759px;top:75px;" width="15" height="20" viewBox="0 0 15 20"><g fill="#111"><rect x="4.6" y="12.7" width="1.5" height="1.7"/><rect x="7.4" y="12.7" width="1.5" height="1.7"/><rect x="10.1" y="12.7" width="1.5" height="1.7"/></g></svg>
<div style="position:absolute;left:1087px;top:75px;width:15px;height:20px;background:#EFEFEF;"></div>
<svg style="position:absolute;left:1087px;top:75px;" width="15" height="20" viewBox="0 0 15 20"><g fill="#111"><rect x="4.6" y="12.7" width="1.5" height="1.7"/><rect x="7.4" y="12.7" width="1.5" height="1.7"/><rect x="10.1" y="12.7" width="1.5" height="1.7"/></g></svg>
<div class="t" style="left:51px;top:81px;font-size:11.85px;color:#000;">squad_loadout_ext</div>
<div class="t" style="left:321.29999999999995px;top:81px;font-size:11.85px;color:#000;">sbpextensions\squ...</div>
<div class="t" style="left:480.9px;top:81px;font-size:11.85px;color:#000;">sbpextensions\squad_loadout_ext</div>
<div class="t" style="left:809px;top:81px;font-size:11.85px;color:#000;">sbpextensions\squad_loadout_ext</div>
<svg style="position:absolute;left:454px;top:83px;" width="4" height="4" viewBox="0 0 4 4"><circle cx="2" cy="2.5" r="1.5" fill="#FF9A10"/></svg>
<svg style="position:absolute;left:782px;top:83px;" width="4" height="4" viewBox="0 0 4 4"><circle cx="2" cy="2.5" r="1.5" fill="#FF9A10"/></svg>
<div style="position:absolute;left:0px;top:114px;width:1103px;height:1px;background:#EBEBEB;"></div>
<div class="t" style="left:71px;top:101px;font-size:11.85px;color:#000;">extra_unit_index</div>
<div class="t" style="left:321.29999999999995px;top:101px;font-size:11.85px;color:#000;">0</div>
<div class="t" style="left:480.9px;top:101px;font-size:11.85px;color:#000;">0</div>
<div class="t" style="left:809px;top:101px;font-size:11.85px;color:#000;">0</div>
<svg style="position:absolute;left:454px;top:103px;" width="4" height="4" viewBox="0 0 4 4"><circle cx="2" cy="2.5" r="1.5" fill="#FF9A10"/></svg>
<svg style="position:absolute;left:782px;top:103px;" width="4" height="4" viewBox="0 0 4 4"><circle cx="2" cy="2.5" r="1.5" fill="#FF9A10"/></svg>
<div style="position:absolute;left:0px;top:134px;width:1103px;height:1px;background:#EBEBEB;"></div>
<div class="t" style="left:71px;top:121px;font-size:11.85px;color:#000;">squad_female_chance</div>
<div class="t" style="left:321.29999999999995px;top:121px;font-size:11.85px;color:#000;">0</div>
<div class="t" style="left:480.9px;top:121px;font-size:11.85px;color:#000;">0</div>
<div class="t" style="left:809px;top:121px;font-size:11.85px;color:#000;">0</div>
<svg style="position:absolute;left:454px;top:123px;" width="4" height="4" viewBox="0 0 4 4"><circle cx="2" cy="2.5" r="1.5" fill="#FF9A10"/></svg>
<svg style="position:absolute;left:782px;top:123px;" width="4" height="4" viewBox="0 0 4 4"><circle cx="2" cy="2.5" r="1.5" fill="#FF9A10"/></svg>
<div style="position:absolute;left:0px;top:154px;width:447px;height:1px;background:#EBEBEB;"></div>
<div style="position:absolute;left:479px;top:154px;width:296px;height:1px;background:#EBEBEB;"></div>
<div style="position:absolute;left:807px;top:154px;width:296px;height:1px;background:#EBEBEB;"></div>
<div class="t" style="left:71px;top:141px;font-size:11.85px;color:#000;">unit_list</div>
<div class="t" style="left:321.29999999999995px;top:141px;font-size:11.85px;color:#000;"></div>
<div class="t" style="left:480.9px;top:141px;font-size:11.85px;color:#000;"></div>
<div class="t" style="left:809px;top:141px;font-size:11.85px;color:#000;"></div>
<svg style="position:absolute;left:454px;top:143px;" width="4" height="4" viewBox="0 0 4 4"><circle cx="2" cy="2.5" r="1.5" fill="#FF9A10"/></svg>
<svg style="position:absolute;left:782px;top:143px;" width="4" height="4" viewBox="0 0 4 4"><circle cx="2" cy="2.5" r="1.5" fill="#FF9A10"/></svg>
<div style="position:absolute;left:0px;top:174px;width:447px;height:1px;background:#EBEBEB;"></div>
<div style="position:absolute;left:479px;top:174px;width:296px;height:1px;background:#EBEBEB;"></div>
<div style="position:absolute;left:807px;top:174px;width:296px;height:1px;background:#EBEBEB;"></div>
<div class="t" style="left:91px;top:161px;font-size:11.85px;color:#000;">1. loadout_data</div>
<div class="t" style="left:321.29999999999995px;top:161px;font-size:11.85px;color:#000;"></div>
<div class="t" style="left:480.9px;top:161px;font-size:11.85px;color:#000;"></div>
<div class="t" style="left:809px;top:161px;font-size:11.85px;color:#000;"></div>
<svg style="position:absolute;left:454px;top:163px;" width="4" height="4" viewBox="0 0 4 4"><circle cx="2" cy="2.5" r="1.5" fill="#FF9A10"/></svg>
<svg style="position:absolute;left:782px;top:163px;" width="4" height="4" viewBox="0 0 4 4"><circle cx="2" cy="2.5" r="1.5" fill="#FF9A10"/></svg>
<div style="position:absolute;left:0px;top:194px;width:1103px;height:1px;background:#EBEBEB;"></div>
<div class="t" style="left:111px;top:181px;font-size:11.85px;color:#000;">is_default_unit</div>
<div class="t" style="left:321.29999999999995px;top:181px;font-size:11.85px;color:#000;">True</div>
<div class="t" style="left:480.9px;top:181px;font-size:11.85px;color:#000;">True</div>
<div class="t" style="left:809px;top:181px;font-size:11.85px;color:#000;">True</div>
<svg style="position:absolute;left:454px;top:183px;" width="4" height="4" viewBox="0 0 4 4"><circle cx="2" cy="2.5" r="1.5" fill="#FF9A10"/></svg>
<svg style="position:absolute;left:782px;top:183px;" width="4" height="4" viewBox="0 0 4 4"><circle cx="2" cy="2.5" r="1.5" fill="#FF9A10"/></svg>
<div style="position:absolute;left:0px;top:214px;width:1103px;height:1px;background:#EBEBEB;"></div>
<div class="t" style="left:111px;top:201px;font-size:11.85px;color:#000;">num</div>
<div class="t" style="left:321.29999999999995px;top:201px;font-size:11.85px;color:#000;">5</div>
<div class="t" style="left:480.9px;top:201px;font-size:11.85px;color:#000;">5</div>
<div class="t" style="left:809px;top:201px;font-size:11.85px;color:#000;">5</div>
<svg style="position:absolute;left:454px;top:203px;" width="4" height="4" viewBox="0 0 4 4"><circle cx="2" cy="2.5" r="1.5" fill="#FF9A10"/></svg>
<svg style="position:absolute;left:782px;top:203px;" width="4" height="4" viewBox="0 0 4 4"><circle cx="2" cy="2.5" r="1.5" fill="#FF9A10"/></svg>
<div style="position:absolute;left:0px;top:234px;width:1103px;height:1px;background:#EBEBEB;"></div>
<div style="position:absolute;left:431px;top:215px;width:15px;height:20px;background:#EFEFEF;"></div>
<svg style="position:absolute;left:431px;top:215px;" width="15" height="20" viewBox="0 0 15 20"><g fill="#111"><rect x="4.6" y="12.7" width="1.5" height="1.7"/><rect x="7.4" y="12.7" width="1.5" height="1.7"/><rect x="10.1" y="12.7" width="1.5" height="1.7"/></g></svg>
<div style="position:absolute;left:759px;top:215px;width:15px;height:20px;background:#EFEFEF;"></div>
<svg style="position:absolute;left:759px;top:215px;" width="15" height="20" viewBox="0 0 15 20"><g fill="#111"><rect x="4.6" y="12.7" width="1.5" height="1.7"/><rect x="7.4" y="12.7" width="1.5" height="1.7"/><rect x="10.1" y="12.7" width="1.5" height="1.7"/></g></svg>
<div style="position:absolute;left:1087px;top:215px;width:15px;height:20px;background:#EFEFEF;"></div>
<svg style="position:absolute;left:1087px;top:215px;" width="15" height="20" viewBox="0 0 15 20"><g fill="#111"><rect x="4.6" y="12.7" width="1.5" height="1.7"/><rect x="7.4" y="12.7" width="1.5" height="1.7"/><rect x="10.1" y="12.7" width="1.5" height="1.7"/></g></svg>
<div class="t" style="left:111px;top:221px;font-size:11.85px;color:#000;">type</div>
<div class="t" style="left:321.29999999999995px;top:221px;font-size:11.85px;color:#000;">attributes\ebps\ra...</div>
<div class="t" style="left:480.9px;top:221px;font-size:11.85px;color:#000;">...\afrika_korps\infantry\assault_panzergrenadier_ak</div>
<div class="t" style="left:809px;top:221px;font-size:11.85px;color:#000;">...\afrika_korps\infantry\assault_panzergrenadier_ak</div>
<svg style="position:absolute;left:450px;top:220px;" width="11" height="11" viewBox="0 0 11 11"><circle cx="5.3" cy="5.1" r="4.6" fill="#1A73E8"/></svg>
<svg style="position:absolute;left:778px;top:220px;" width="11" height="11" viewBox="0 0 11 11"><circle cx="5.3" cy="5.1" r="4.6" fill="#1A73E8"/></svg>
<div style="position:absolute;left:0px;top:254px;width:447px;height:1px;background:#EBEBEB;"></div>
<div style="position:absolute;left:479px;top:254px;width:296px;height:1px;background:#EBEBEB;"></div>
<div style="position:absolute;left:807px;top:254px;width:296px;height:1px;background:#EBEBEB;"></div>
<div class="t" style="left:111px;top:241px;font-size:11.85px;color:#000;">unit_attachments</div>
<div class="t" style="left:321.29999999999995px;top:241px;font-size:11.85px;color:#000;"></div>
<div class="t" style="left:480.9px;top:241px;font-size:11.85px;color:#000;"></div>
<div class="t" style="left:809px;top:241px;font-size:11.85px;color:#000;"></div>
<svg style="position:absolute;left:454px;top:243px;" width="4" height="4" viewBox="0 0 4 4"><circle cx="2" cy="2.5" r="1.5" fill="#FF9A10"/></svg>
<svg style="position:absolute;left:782px;top:243px;" width="4" height="4" viewBox="0 0 4 4"><circle cx="2" cy="2.5" r="1.5" fill="#FF9A10"/></svg>
<div style="position:absolute;left:0px;top:274px;width:1103px;height:1px;background:#EBEBEB;"></div>
<div style="position:absolute;left:431px;top:255px;width:15px;height:20px;background:#EFEFEF;"></div>
<svg style="position:absolute;left:431px;top:255px;" width="15" height="20" viewBox="0 0 15 20"><g fill="#111"><rect x="4.6" y="12.7" width="1.5" height="1.7"/><rect x="7.4" y="12.7" width="1.5" height="1.7"/><rect x="10.1" y="12.7" width="1.5" height="1.7"/></g></svg>
<div style="position:absolute;left:759px;top:255px;width:15px;height:20px;background:#EFEFEF;"></div>
<svg style="position:absolute;left:759px;top:255px;" width="15" height="20" viewBox="0 0 15 20"><g fill="#111"><rect x="4.6" y="12.7" width="1.5" height="1.7"/><rect x="7.4" y="12.7" width="1.5" height="1.7"/><rect x="10.1" y="12.7" width="1.5" height="1.7"/></g></svg>
<div style="position:absolute;left:1087px;top:255px;width:15px;height:20px;background:#EFEFEF;"></div>
<svg style="position:absolute;left:1087px;top:255px;" width="15" height="20" viewBox="0 0 15 20"><g fill="#111"><rect x="4.6" y="12.7" width="1.5" height="1.7"/><rect x="7.4" y="12.7" width="1.5" height="1.7"/><rect x="10.1" y="12.7" width="1.5" height="1.7"/></g></svg>
<div class="t" style="left:51px;top:261px;font-size:11.85px;color:#000;">squad_modifier_ext</div>
<div class="t" style="left:321.29999999999995px;top:261px;font-size:11.85px;color:#000;">sbpextensions\squ...</div>
<div class="t" style="left:480.9px;top:261px;font-size:11.85px;color:#000;">sbpextensions\squad_modifier_ext</div>
<div class="t" style="left:809px;top:261px;font-size:11.85px;color:#000;">sbpextensions\squad_modifier_ext</div>
<svg style="position:absolute;left:454px;top:263px;" width="4" height="4" viewBox="0 0 4 4"><circle cx="2" cy="2.5" r="1.5" fill="#FF9A10"/></svg>
<svg style="position:absolute;left:782px;top:263px;" width="4" height="4" viewBox="0 0 4 4"><circle cx="2" cy="2.5" r="1.5" fill="#FF9A10"/></svg>
<div style="position:absolute;left:0px;top:294px;width:1103px;height:1px;background:#EBEBEB;"></div>
<div style="position:absolute;left:431px;top:275px;width:15px;height:20px;background:#EFEFEF;"></div>
<svg style="position:absolute;left:431px;top:275px;" width="15" height="20" viewBox="0 0 15 20"><g fill="#111"><rect x="4.6" y="12.7" width="1.5" height="1.7"/><rect x="7.4" y="12.7" width="1.5" height="1.7"/><rect x="10.1" y="12.7" width="1.5" height="1.7"/></g></svg>
<div style="position:absolute;left:759px;top:275px;width:15px;height:20px;background:#EFEFEF;"></div>
<svg style="position:absolute;left:759px;top:275px;" width="15" height="20" viewBox="0 0 15 20"><g fill="#111"><rect x="4.6" y="12.7" width="1.5" height="1.7"/><rect x="7.4" y="12.7" width="1.5" height="1.7"/><rect x="10.1" y="12.7" width="1.5" height="1.7"/></g></svg>
<div style="position:absolute;left:1087px;top:275px;width:15px;height:20px;background:#EFEFEF;"></div>
<svg style="position:absolute;left:1087px;top:275px;" width="15" height="20" viewBox="0 0 15 20"><g fill="#111"><rect x="4.6" y="12.7" width="1.5" height="1.7"/><rect x="7.4" y="12.7" width="1.5" height="1.7"/><rect x="10.1" y="12.7" width="1.5" height="1.7"/></g></svg>
<div class="t" style="left:51px;top:281px;font-size:11.85px;color:#000;">squad_population_ext</div>
<div class="t" style="left:321.29999999999995px;top:281px;font-size:11.85px;color:#000;">sbpextensions\squ...</div>
<div class="t" style="left:480.9px;top:281px;font-size:11.85px;color:#000;">sbpextensions\squad_population_ext</div>
<div class="t" style="left:809px;top:281px;font-size:11.85px;color:#000;">sbpextensions\squad_population_ext</div>
<svg style="position:absolute;left:450px;top:280px;" width="11" height="11" viewBox="0 0 11 11"><circle cx="5.35" cy="5.05" r="3.55" fill="none" stroke="#1E88E5" stroke-width="2.2"/></svg>
<svg style="position:absolute;left:778px;top:280px;" width="11" height="11" viewBox="0 0 11 11"><circle cx="5.35" cy="5.05" r="3.55" fill="none" stroke="#1E88E5" stroke-width="2.2"/></svg>
<div style="position:absolute;left:0px;top:314px;width:1103px;height:1px;background:#EBEBEB;"></div>
<div style="position:absolute;left:431px;top:295px;width:15px;height:20px;background:#EFEFEF;"></div>
<svg style="position:absolute;left:431px;top:295px;" width="15" height="20" viewBox="0 0 15 20"><g fill="#111"><rect x="4.6" y="12.7" width="1.5" height="1.7"/><rect x="7.4" y="12.7" width="1.5" height="1.7"/><rect x="10.1" y="12.7" width="1.5" height="1.7"/></g></svg>
<div style="position:absolute;left:759px;top:295px;width:15px;height:20px;background:#EFEFEF;"></div>
<svg style="position:absolute;left:759px;top:295px;" width="15" height="20" viewBox="0 0 15 20"><g fill="#111"><rect x="4.6" y="12.7" width="1.5" height="1.7"/><rect x="7.4" y="12.7" width="1.5" height="1.7"/><rect x="10.1" y="12.7" width="1.5" height="1.7"/></g></svg>
<div style="position:absolute;left:1087px;top:295px;width:15px;height:20px;background:#EFEFEF;"></div>
<svg style="position:absolute;left:1087px;top:295px;" width="15" height="20" viewBox="0 0 15 20"><g fill="#111"><rect x="4.6" y="12.7" width="1.5" height="1.7"/><rect x="7.4" y="12.7" width="1.5" height="1.7"/><rect x="10.1" y="12.7" width="1.5" height="1.7"/></g></svg>
<div class="t" style="left:51px;top:301px;font-size:11.85px;color:#000;">squad_range_ext</div>
<div class="t" style="left:321.29999999999995px;top:301px;font-size:11.85px;color:#000;">sbpextensions\squ...</div>
<div class="t" style="left:480.9px;top:301px;font-size:11.85px;color:#000;">sbpextensions\squad_range_ext</div>
<div class="t" style="left:809px;top:301px;font-size:11.85px;color:#000;">sbpextensions\squad_range_ext</div>
<svg style="position:absolute;left:454px;top:303px;" width="4" height="4" viewBox="0 0 4 4"><circle cx="2" cy="2.5" r="1.5" fill="#FF9A10"/></svg>
<svg style="position:absolute;left:782px;top:303px;" width="4" height="4" viewBox="0 0 4 4"><circle cx="2" cy="2.5" r="1.5" fill="#FF9A10"/></svg>
<div style="position:absolute;left:0px;top:334px;width:1103px;height:1px;background:#EBEBEB;"></div>
<div style="position:absolute;left:431px;top:315px;width:15px;height:20px;background:#EFEFEF;"></div>
<svg style="position:absolute;left:431px;top:315px;" width="15" height="20" viewBox="0 0 15 20"><g fill="#111"><rect x="4.6" y="12.7" width="1.5" height="1.7"/><rect x="7.4" y="12.7" width="1.5" height="1.7"/><rect x="10.1" y="12.7" width="1.5" height="1.7"/></g></svg>
<div style="position:absolute;left:759px;top:315px;width:15px;height:20px;background:#EFEFEF;"></div>
<svg style="position:absolute;left:759px;top:315px;" width="15" height="20" viewBox="0 0 15 20"><g fill="#111"><rect x="4.6" y="12.7" width="1.5" height="1.7"/><rect x="7.4" y="12.7" width="1.5" height="1.7"/><rect x="10.1" y="12.7" width="1.5" height="1.7"/></g></svg>
<div style="position:absolute;left:1087px;top:315px;width:15px;height:20px;background:#EFEFEF;"></div>
<svg style="position:absolute;left:1087px;top:315px;" width="15" height="20" viewBox="0 0 15 20"><g fill="#111"><rect x="4.6" y="12.7" width="1.5" height="1.7"/><rect x="7.4" y="12.7" width="1.5" height="1.7"/><rect x="10.1" y="12.7" width="1.5" height="1.7"/></g></svg>
<div class="t" style="left:51px;top:321px;font-size:11.85px;color:#000;">squad_reinforce_ext</div>
<div class="t" style="left:321.29999999999995px;top:321px;font-size:11.85px;color:#000;">sbpextensions\squ...</div>
<div class="t" style="left:480.9px;top:321px;font-size:11.85px;color:#000;">sbpextensions\squad_reinforce_ext</div>
<div class="t" style="left:809px;top:321px;font-size:11.85px;color:#000;">sbpextensions\squad_reinforce_ext</div>
<svg style="position:absolute;left:450px;top:320px;" width="11" height="11" viewBox="0 0 11 11"><circle cx="5.35" cy="5.05" r="3.55" fill="none" stroke="#1E88E5" stroke-width="2.2"/></svg>
<svg style="position:absolute;left:778px;top:320px;" width="11" height="11" viewBox="0 0 11 11"><circle cx="5.35" cy="5.05" r="3.55" fill="none" stroke="#1E88E5" stroke-width="2.2"/></svg>
<div style="position:absolute;left:0px;top:354px;width:1103px;height:1px;background:#EBEBEB;"></div>
<div style="position:absolute;left:431px;top:335px;width:15px;height:20px;background:#EFEFEF;"></div>
<svg style="position:absolute;left:431px;top:335px;" width="15" height="20" viewBox="0 0 15 20"><g fill="#111"><rect x="4.6" y="12.7" width="1.5" height="1.7"/><rect x="7.4" y="12.7" width="1.5" height="1.7"/><rect x="10.1" y="12.7" width="1.5" height="1.7"/></g></svg>
<div style="position:absolute;left:759px;top:335px;width:15px;height:20px;background:#EFEFEF;"></div>
<svg style="position:absolute;left:759px;top:335px;" width="15" height="20" viewBox="0 0 15 20"><g fill="#111"><rect x="4.6" y="12.7" width="1.5" height="1.7"/><rect x="7.4" y="12.7" width="1.5" height="1.7"/><rect x="10.1" y="12.7" width="1.5" height="1.7"/></g></svg>
<div style="position:absolute;left:1087px;top:335px;width:15px;height:20px;background:#EFEFEF;"></div>
<svg style="position:absolute;left:1087px;top:335px;" width="15" height="20" viewBox="0 0 15 20"><g fill="#111"><rect x="4.6" y="12.7" width="1.5" height="1.7"/><rect x="7.4" y="12.7" width="1.5" height="1.7"/><rect x="10.1" y="12.7" width="1.5" height="1.7"/></g></svg>
<div class="t" style="left:51px;top:341px;font-size:11.85px;color:#000;">squad_requirement_ext</div>
<div class="t" style="left:321.29999999999995px;top:341px;font-size:11.85px;color:#000;">sbpextensions\squ...</div>
<div class="t" style="left:480.9px;top:341px;font-size:11.85px;color:#000;">sbpextensions\squad_requirement_ext</div>
<div class="t" style="left:809px;top:341px;font-size:11.85px;color:#000;">sbpextensions\squad_requirement_ext</div>
<svg style="position:absolute;left:454px;top:343px;" width="4" height="4" viewBox="0 0 4 4"><circle cx="2" cy="2.5" r="1.5" fill="#FF9A10"/></svg>
<svg style="position:absolute;left:782px;top:343px;" width="4" height="4" viewBox="0 0 4 4"><circle cx="2" cy="2.5" r="1.5" fill="#FF9A10"/></svg>
<div style="position:absolute;left:0px;top:374px;width:1103px;height:1px;background:#EBEBEB;"></div>
<div style="position:absolute;left:431px;top:355px;width:15px;height:20px;background:#EFEFEF;"></div>
<svg style="position:absolute;left:431px;top:355px;" width="15" height="20" viewBox="0 0 15 20"><g fill="#111"><rect x="4.6" y="12.7" width="1.5" height="1.7"/><rect x="7.4" y="12.7" width="1.5" height="1.7"/><rect x="10.1" y="12.7" width="1.5" height="1.7"/></g></svg>
<div style="position:absolute;left:759px;top:355px;width:15px;height:20px;background:#EFEFEF;"></div>
<svg style="position:absolute;left:759px;top:355px;" width="15" height="20" viewBox="0 0 15 20"><g fill="#111"><rect x="4.6" y="12.7" width="1.5" height="1.7"/><rect x="7.4" y="12.7" width="1.5" height="1.7"/><rect x="10.1" y="12.7" width="1.5" height="1.7"/></g></svg>
<div style="position:absolute;left:1087px;top:355px;width:15px;height:20px;background:#EFEFEF;"></div>
<svg style="position:absolute;left:1087px;top:355px;" width="15" height="20" viewBox="0 0 15 20"><g fill="#111"><rect x="4.6" y="12.7" width="1.5" height="1.7"/><rect x="7.4" y="12.7" width="1.5" height="1.7"/><rect x="10.1" y="12.7" width="1.5" height="1.7"/></g></svg>
<div class="t" style="left:51px;top:361px;font-size:11.85px;color:#000;">squad_retreat_ext</div>
<div class="t" style="left:321.29999999999995px;top:361px;font-size:11.85px;color:#000;">sbpextensions\squ...</div>
<div class="t" style="left:480.9px;top:361px;font-size:11.85px;color:#000;">sbpextensions\squad_retreat_ext</div>
<div class="t" style="left:809px;top:361px;font-size:11.85px;color:#000;">sbpextensions\squad_retreat_ext</div>
<svg style="position:absolute;left:450px;top:360px;" width="11" height="11" viewBox="0 0 11 11"><circle cx="5.35" cy="5.05" r="3.55" fill="none" stroke="#1E88E5" stroke-width="2.2"/></svg>
<svg style="position:absolute;left:778px;top:360px;" width="11" height="11" viewBox="0 0 11 11"><circle cx="5.35" cy="5.05" r="3.55" fill="none" stroke="#1E88E5" stroke-width="2.2"/></svg>
<div style="position:absolute;left:0px;top:394px;width:1103px;height:1px;background:#EBEBEB;"></div>
<div style="position:absolute;left:431px;top:375px;width:15px;height:20px;background:#EFEFEF;"></div>
<svg style="position:absolute;left:431px;top:375px;" width="15" height="20" viewBox="0 0 15 20"><g fill="#111"><rect x="4.6" y="12.7" width="1.5" height="1.7"/><rect x="7.4" y="12.7" width="1.5" height="1.7"/><rect x="10.1" y="12.7" width="1.5" height="1.7"/></g></svg>
<div style="position:absolute;left:759px;top:375px;width:15px;height:20px;background:#EFEFEF;"></div>
<svg style="position:absolute;left:759px;top:375px;" width="15" height="20" viewBox="0 0 15 20"><g fill="#111"><rect x="4.6" y="12.7" width="1.5" height="1.7"/><rect x="7.4" y="12.7" width="1.5" height="1.7"/><rect x="10.1" y="12.7" width="1.5" height="1.7"/></g></svg>
<div style="position:absolute;left:1087px;top:375px;width:15px;height:20px;background:#EFEFEF;"></div>
<svg style="position:absolute;left:1087px;top:375px;" width="15" height="20" viewBox="0 0 15 20"><g fill="#111"><rect x="4.6" y="12.7" width="1.5" height="1.7"/><rect x="7.4" y="12.7" width="1.5" height="1.7"/><rect x="10.1" y="12.7" width="1.5" height="1.7"/></g></svg>
<div class="t" style="left:51px;top:381px;font-size:11.85px;color:#000;">squad_shared_veterancy_ext</div>
<div class="t" style="left:321.29999999999995px;top:381px;font-size:11.85px;color:#000;">sbpextensions\squ...</div>
<div class="t" style="left:480.9px;top:381px;font-size:11.85px;color:#000;">sbpextensions\squad_shared_veterancy_ext</div>
<div class="t" style="left:809px;top:381px;font-size:11.85px;color:#000;">sbpextensions\squad_shared_veterancy_ext</div>
<svg style="position:absolute;left:454px;top:383px;" width="4" height="4" viewBox="0 0 4 4"><circle cx="2" cy="2.5" r="1.5" fill="#FF9A10"/></svg>
<svg style="position:absolute;left:782px;top:383px;" width="4" height="4" viewBox="0 0 4 4"><circle cx="2" cy="2.5" r="1.5" fill="#FF9A10"/></svg>
<div style="position:absolute;left:0px;top:414px;width:1103px;height:1px;background:#EBEBEB;"></div>
<div style="position:absolute;left:431px;top:395px;width:15px;height:20px;background:#EFEFEF;"></div>
<svg style="position:absolute;left:431px;top:395px;" width="15" height="20" viewBox="0 0 15 20"><g fill="#111"><rect x="4.6" y="12.7" width="1.5" height="1.7"/><rect x="7.4" y="12.7" width="1.5" height="1.7"/><rect x="10.1" y="12.7" width="1.5" height="1.7"/></g></svg>
<div style="position:absolute;left:759px;top:395px;width:15px;height:20px;background:#EFEFEF;"></div>
<svg style="position:absolute;left:759px;top:395px;" width="15" height="20" viewBox="0 0 15 20"><g fill="#111"><rect x="4.6" y="12.7" width="1.5" height="1.7"/><rect x="7.4" y="12.7" width="1.5" height="1.7"/><rect x="10.1" y="12.7" width="1.5" height="1.7"/></g></svg>
<div style="position:absolute;left:1087px;top:395px;width:15px;height:20px;background:#EFEFEF;"></div>
<svg style="position:absolute;left:1087px;top:395px;" width="15" height="20" viewBox="0 0 15 20"><g fill="#111"><rect x="4.6" y="12.7" width="1.5" height="1.7"/><rect x="7.4" y="12.7" width="1.5" height="1.7"/><rect x="10.1" y="12.7" width="1.5" height="1.7"/></g></svg>
<div class="t" style="left:51px;top:401px;font-size:11.85px;color:#000;">squad_speech_ext</div>
<div class="t" style="left:321.29999999999995px;top:401px;font-size:11.85px;color:#000;">sbpextensions\squ...</div>
<div class="t" style="left:480.9px;top:401px;font-size:11.85px;color:#000;">sbpextensions\squad_speech_ext</div>
<div class="t" style="left:809px;top:401px;font-size:11.85px;color:#000;">sbpextensions\squad_speech_ext</div>
<svg style="position:absolute;left:450px;top:400px;" width="11" height="11" viewBox="0 0 11 11"><circle cx="5.35" cy="5.05" r="3.55" fill="none" stroke="#1E88E5" stroke-width="2.2"/></svg>
<svg style="position:absolute;left:778px;top:400px;" width="11" height="11" viewBox="0 0 11 11"><circle cx="5.35" cy="5.05" r="3.55" fill="none" stroke="#1E88E5" stroke-width="2.2"/></svg>
<div style="position:absolute;left:0px;top:434px;width:1103px;height:1px;background:#EBEBEB;"></div>
<div style="position:absolute;left:431px;top:415px;width:15px;height:20px;background:#EFEFEF;"></div>
<svg style="position:absolute;left:431px;top:415px;" width="15" height="20" viewBox="0 0 15 20"><g fill="#111"><rect x="4.6" y="12.7" width="1.5" height="1.7"/><rect x="7.4" y="12.7" width="1.5" height="1.7"/><rect x="10.1" y="12.7" width="1.5" height="1.7"/></g></svg>
<div style="position:absolute;left:759px;top:415px;width:15px;height:20px;background:#EFEFEF;"></div>
<svg style="position:absolute;left:759px;top:415px;" width="15" height="20" viewBox="0 0 15 20"><g fill="#111"><rect x="4.6" y="12.7" width="1.5" height="1.7"/><rect x="7.4" y="12.7" width="1.5" height="1.7"/><rect x="10.1" y="12.7" width="1.5" height="1.7"/></g></svg>
<div style="position:absolute;left:1087px;top:415px;width:15px;height:20px;background:#EFEFEF;"></div>
<svg style="position:absolute;left:1087px;top:415px;" width="15" height="20" viewBox="0 0 15 20"><g fill="#111"><rect x="4.6" y="12.7" width="1.5" height="1.7"/><rect x="7.4" y="12.7" width="1.5" height="1.7"/><rect x="10.1" y="12.7" width="1.5" height="1.7"/></g></svg>
<div class="t" style="left:51px;top:421px;font-size:11.85px;color:#000;">squad_statemodel_ext</div>
<div class="t" style="left:321.29999999999995px;top:421px;font-size:11.85px;color:#000;">sbpextensions\squ...</div>
<div class="t" style="left:480.9px;top:421px;font-size:11.85px;color:#000;">sbpextensions\squad_statemodel_ext</div>
<div class="t" style="left:809px;top:421px;font-size:11.85px;color:#000;">sbpextensions\squad_statemodel_ext</div>
<svg style="position:absolute;left:454px;top:423px;" width="4" height="4" viewBox="0 0 4 4"><circle cx="2" cy="2.5" r="1.5" fill="#FF9A10"/></svg>
<svg style="position:absolute;left:782px;top:423px;" width="4" height="4" viewBox="0 0 4 4"><circle cx="2" cy="2.5" r="1.5" fill="#FF9A10"/></svg>
<svg style="left:0;top:0" width="1103" height="425" viewBox="398 144 1103 425"><path d="M416.5 142 V569" stroke="#5E5E5E" stroke-width="1" stroke-dasharray="3 1" stroke-dashoffset="0"/><path d="M436.5 142 V569" stroke="#5E5E5E" stroke-width="1" stroke-dasharray="3 1" stroke-dashoffset="0"/><path d="M442 148.5 H447" stroke="#5E5E5E" stroke-width="1" stroke-dasharray="3 1"/><path d="M442 168.5 H447" stroke="#5E5E5E" stroke-width="1" stroke-dasharray="3 1"/><path d="M442 188.5 H447" stroke="#5E5E5E" stroke-width="1" stroke-dasharray="3 1"/><path d="M442 208.5 H447" stroke="#5E5E5E" stroke-width="1" stroke-dasharray="3 1"/><path d="M442 228.5 H447" stroke="#5E5E5E" stroke-width="1" stroke-dasharray="3 1"/><path d="M458 248.5 H467" stroke="#5E5E5E" stroke-width="1" stroke-dasharray="3 1"/><path d="M458 268.5 H467" stroke="#5E5E5E" stroke-width="1" stroke-dasharray="3 1"/><path d="M462 288.5 H467" stroke="#5E5E5E" stroke-width="1" stroke-dasharray="3 1"/><path d="M482 308.5 H487" stroke="#5E5E5E" stroke-width="1" stroke-dasharray="3 1"/><path d="M498 328.5 H507" stroke="#5E5E5E" stroke-width="1" stroke-dasharray="3 1"/><path d="M498 348.5 H507" stroke="#5E5E5E" stroke-width="1" stroke-dasharray="3 1"/><path d="M498 368.5 H507" stroke="#5E5E5E" stroke-width="1" stroke-dasharray="3 1"/><path d="M498 388.5 H507" stroke="#5E5E5E" stroke-width="1" stroke-dasharray="3 1"/><path d="M438 408.5 H447" stroke="#5E5E5E" stroke-width="1" stroke-dasharray="3 1"/><path d="M442 428.5 H447" stroke="#5E5E5E" stroke-width="1" stroke-dasharray="3 1"/><path d="M442 448.5 H447" stroke="#5E5E5E" stroke-width="1" stroke-dasharray="3 1"/><path d="M442 468.5 H447" stroke="#5E5E5E" stroke-width="1" stroke-dasharray="3 1"/><path d="M442 488.5 H447" stroke="#5E5E5E" stroke-width="1" stroke-dasharray="3 1"/><path d="M442 508.5 H447" stroke="#5E5E5E" stroke-width="1" stroke-dasharray="3 1"/><path d="M442 528.5 H447" stroke="#5E5E5E" stroke-width="1" stroke-dasharray="3 1"/><path d="M442 548.5 H447" stroke="#5E5E5E" stroke-width="1" stroke-dasharray="3 1"/><path d="M442 568.5 H447" stroke="#5E5E5E" stroke-width="1" stroke-dasharray="3 1"/><path d="M456.5 239 V283" stroke="#5E5E5E" stroke-width="1" stroke-dasharray="3 1" stroke-dashoffset="1"/><path d="M476.5 299 V303" stroke="#5E5E5E" stroke-width="1" stroke-dasharray="3 1" stroke-dashoffset="1"/><path d="M496.5 319 V389" stroke="#5E5E5E" stroke-width="1" stroke-dasharray="3 1" stroke-dashoffset="1"/><rect x="431.5" y="143.5" width="10" height="10" fill="#fff" stroke="#6E6E6E" stroke-width="1"/><path d="M434 148.5 H439" stroke="#333" stroke-width="1"/><path d="M436.5 146 V151" stroke="#333" stroke-width="1"/><rect x="431.5" y="163.5" width="10" height="10" fill="#fff" stroke="#6E6E6E" stroke-width="1"/><path d="M434 168.5 H439" stroke="#333" stroke-width="1"/><path d="M436.5 166 V171" stroke="#333" stroke-width="1"/><rect x="431.5" y="183.5" width="10" height="10" fill="#fff" stroke="#6E6E6E" stroke-width="1"/><path d="M434 188.5 H439" stroke="#333" stroke-width="1"/><path d="M436.5 186 V191" stroke="#333" stroke-width="1"/><rect x="431.5" y="203.5" width="10" height="10" fill="#fff" stroke="#6E6E6E" stroke-width="1"/><path d="M434 208.5 H439" stroke="#333" stroke-width="1"/><path d="M436.5 206 V211" stroke="#333" stroke-width="1"/><rect x="431.5" y="223.5" width="10" height="10" fill="#fff" stroke="#6E6E6E" stroke-width="1"/><path d="M434 228.5 H439" stroke="#333" stroke-width="1"/><rect x="451.5" y="283.5" width="10" height="10" fill="#fff" stroke="#6E6E6E" stroke-width="1"/><path d="M454 288.5 H459" stroke="#333" stroke-width="1"/><rect x="471.5" y="303.5" width="10" height="10" fill="#fff" stroke="#6E6E6E" stroke-width="1"/><path d="M474 308.5 H479" stroke="#333" stroke-width="1"/><rect x="431.5" y="423.5" width="10" height="10" fill="#fff" stroke="#6E6E6E" stroke-width="1"/><path d="M434 428.5 H439" stroke="#333" stroke-width="1"/><path d="M436.5 426 V431" stroke="#333" stroke-width="1"/><rect x="431.5" y="443.5" width="10" height="10" fill="#fff" stroke="#6E6E6E" stroke-width="1"/><path d="M434 448.5 H439" stroke="#333" stroke-width="1"/><path d="M436.5 446 V451" stroke="#333" stroke-width="1"/><rect x="431.5" y="463.5" width="10" height="10" fill="#fff" stroke="#6E6E6E" stroke-width="1"/><path d="M434 468.5 H439" stroke="#333" stroke-width="1"/><path d="M436.5 466 V471" stroke="#333" stroke-width="1"/><rect x="431.5" y="483.5" width="10" height="10" fill="#fff" stroke="#6E6E6E" stroke-width="1"/><path d="M434 488.5 H439" stroke="#333" stroke-width="1"/><path d="M436.5 486 V491" stroke="#333" stroke-width="1"/><rect x="431.5" y="503.5" width="10" height="10" fill="#fff" stroke="#6E6E6E" stroke-width="1"/><path d="M434 508.5 H439" stroke="#333" stroke-width="1"/><path d="M436.5 506 V511" stroke="#333" stroke-width="1"/><rect x="431.5" y="523.5" width="10" height="10" fill="#fff" stroke="#6E6E6E" stroke-width="1"/><path d="M434 528.5 H439" stroke="#333" stroke-width="1"/><path d="M436.5 526 V531" stroke="#333" stroke-width="1"/><rect x="431.5" y="543.5" width="10" height="10" fill="#fff" stroke="#6E6E6E" stroke-width="1"/><path d="M434 548.5 H439" stroke="#333" stroke-width="1"/><path d="M436.5 546 V551" stroke="#333" stroke-width="1"/><rect x="431.5" y="563.5" width="10" height="10" fill="#fff" stroke="#6E6E6E" stroke-width="1"/><path d="M434 568.5 H439" stroke="#333" stroke-width="1"/><path d="M436.5 566 V571" stroke="#333" stroke-width="1"/></svg>
<div style="position:absolute;left:318px;top:0px;width:1px;height:425px;background:#A0A0A0;"></div>
<div style="position:absolute;left:446px;top:0px;width:1px;height:425px;background:#A0A0A0;"></div>
<div style="position:absolute;left:774px;top:0px;width:1px;height:425px;background:#A0A0A0;"></div>
</div>
<div style="position:absolute;left:716px;top:125px;width:1px;height:19px;background:#A0A0A0;"></div>
<div style="position:absolute;left:844px;top:125px;width:1px;height:19px;background:#A0A0A0;"></div>
<div style="position:absolute;left:1172px;top:125px;width:1px;height:19px;background:#A0A0A0;"></div>
<div style="position:absolute;left:1500px;top:125px;width:1px;height:444px;background:#A0A0A0;"></div>
<div style="position:absolute;left:1527px;top:67px;width:94px;height:502px;background:#fff;box-sizing:border-box;border:1px solid #ACACAC;border-bottom:none;"></div>
<div class="t" style="left:1530.3px;top:75px;font-size:11.85px;color:#000;">Pro...</div>
<svg style="position:absolute;left:1566px;top:77px;" width="10" height="6" viewBox="0 0 10 6"><path d="M1 1H9L5 5Z" fill="#333"/></svg>
<svg style="position:absolute;left:1585px;top:75px;shape-rendering:crispEdges" width="9" height="11" viewBox="0 0 9 11"><path d="M2.5 1.5H6.5V7" fill="none" stroke="#222" stroke-width="1"/><path d="M2.5 1V7" stroke="#222" stroke-width="1"/><rect x="5" y="1" width="2" height="6" fill="#222"/><rect x="1" y="7" width="7" height="1.2" fill="#222"/><rect x="4" y="8" width="1" height="3" fill="#222"/></svg>
<svg style="position:absolute;left:1605px;top:77px;" width="8" height="8" viewBox="0 0 8 8"><path d="M0.3 0.3L7.7 7.7M7.7 0.3L0.3 7.7" stroke="#222" stroke-width="1"/></svg>
<div style="position:absolute;left:1530px;top:90px;width:88px;height:479px;background:#fff;box-sizing:border-box;border:1px solid #ACACAC;border-bottom:none;"></div>
<div style="position:absolute;left:1531px;top:91px;width:86px;height:60px;background:#D9D9D9;"></div>
<div style="position:absolute;left:1540px;top:119px;width:22px;height:22px;background:#CCE8FF;box-sizing:border-box;border:1px solid #2E6DA4;"></div>
<svg style="position:absolute;left:1540px;top:119px;shape-rendering:crispEdges" width="22" height="22" viewBox="0 0 22 22"><rect x="4" y="4" width="5" height="5" fill="#333"/><path d="M6.5 5V8M5 6.5H8" stroke="#fff" stroke-width="1"/><rect x="4" y="13" width="5" height="5" fill="#333"/><path d="M6.5 14V17M5 15.5H8" stroke="#fff" stroke-width="1"/><g stroke="#333" stroke-width="1"><path d="M10 4.5H15M10 6.5H15M10 8.5H15M10 10.5H15M10 12.5H15M10 15.5H15M10 17.5H15M16 6.5H18M16 8.5H18M16 10.5H18M16 12.5H18M16 17.5H18"/></g></svg>
<svg style="position:absolute;left:1565px;top:122px;" width="17" height="16" viewBox="0 0 17 16"><rect x="1" y="1" width="7" height="7" fill="#333"/><path d="M2.6 7.2 L4.5 2 L6.4 7.2 M3.3 5.6 H5.7" fill="none" stroke="#fff" stroke-width="1.1"/><path d="M2 10 H7.2 V11.4 L4.2 13.6 H7.2 V15 H1.8 V13.6 L4.8 11.4 H2 Z" fill="#333"/><path d="M12 4V10" stroke="#0B5CAD" stroke-width="2.2"/><path d="M9 8.8 H15 L12 13Z" fill="#0B5CAD"/></svg>
<div style="position:absolute;left:1593px;top:117px;width:20px;height:26px;background:#fff;box-sizing:border-box;border:1px solid #7A7A7A;"></div>
<svg style="position:absolute;left:1600px;top:125px;" width="13" height="13" viewBox="0 0 13 13"><path d="M0.8 0.8L12.2 12.2M12.2 0.8L0.8 12.2" stroke="#D9A090" stroke-width="1.8"/></svg>
</body></html>
